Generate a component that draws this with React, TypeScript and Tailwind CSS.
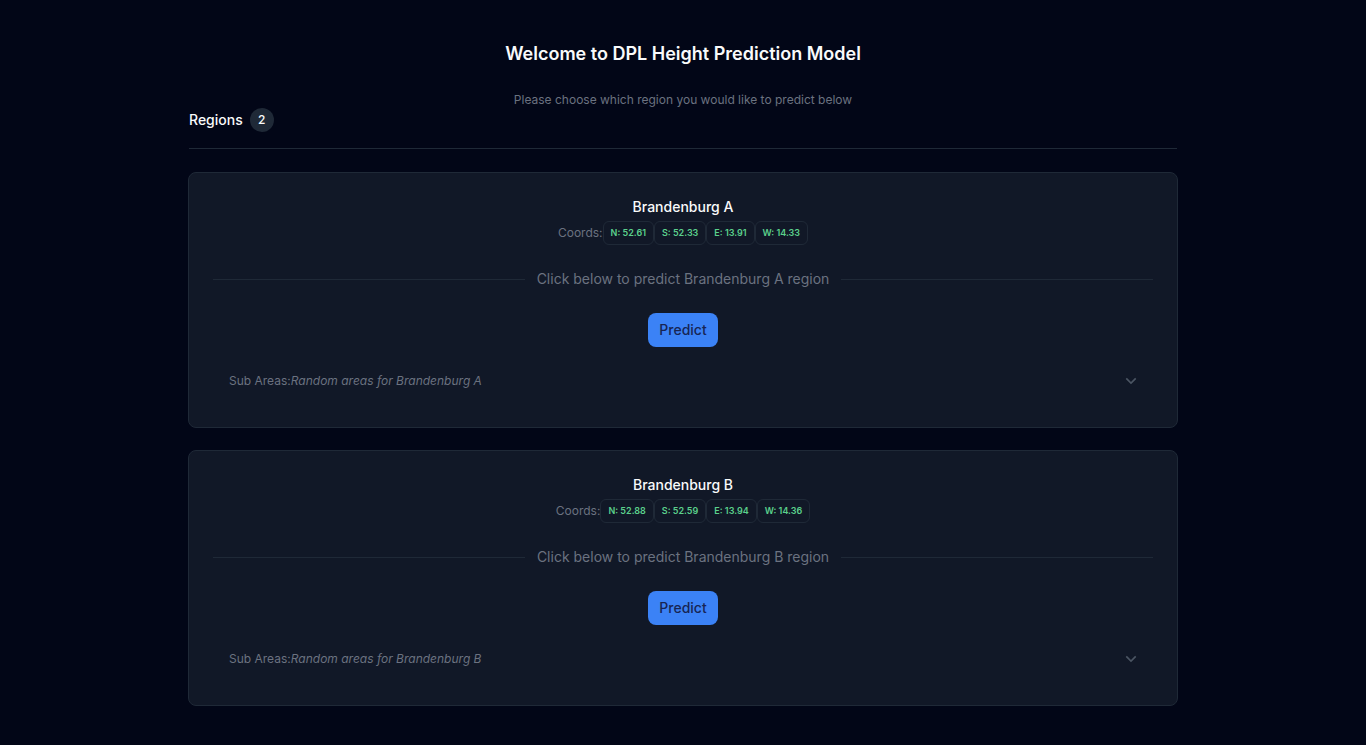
type Region = { name: string; coords: string[] };

const regions: Region[] = [
  { name: "Brandenburg A", coords: ["N: 52.61", "S: 52.33", "E: 13.91", "W: 14.33"] },
  { name: "Brandenburg B", coords: ["N: 52.88", "S: 52.59", "E: 13.94", "W: 14.36"] },
];

function ChevronIcon() {
  return (
    <svg viewBox="0 0 24 24" fill="currentColor" aria-hidden="true" className="-mr-1 size-5 text-[#4b5563]">
      <path d="M11.9999 13.1714L16.9497 8.22168L18.3639 9.63589L11.9999 15.9999L5.63599 9.63589L7.0502 8.22168L11.9999 13.1714Z" />
    </svg>
  );
}

function RegionCard({ region }: { region: Region }) {
  return (
    <section className="rounded-lg border border-[#1f2937] bg-[#111827] p-6">
      <h2 className="text-center text-sm leading-5 font-medium text-[#f9fafb]">{region.name}</h2>
      <div className="mt-1 flex items-center justify-center text-xs text-[#6b7280]">
        <span>Coords:</span>
        {region.coords.map((coord) => (
          <span key={coord} className="rounded-md border border-[#1f2937] px-[7px] py-1 text-[9px] leading-[14px] font-semibold text-[#5bd08c]">
            {coord}
          </span>
        ))}
      </div>
      <div className="my-6 flex items-center gap-3 text-sm leading-5 text-[#6b7280]">
        <div className="h-px flex-1 bg-[#1f2937]" />
        <p>Click below to predict {region.name} region</p>
        <div className="h-px flex-1 bg-[#1f2937]" />
      </div>
      <div className="flex justify-center">
        <button type="button" className="rounded-lg bg-[#3b82f6] px-[11px] py-[7px] text-sm leading-5 font-medium text-[#172554]">
          Predict
        </button>
      </div>
      <button type="button" aria-expanded="false" className="mt-3 flex w-full items-center justify-between px-4 py-3 text-xs text-[#6b7280]">
        <span>
          Sub Areas:<em>Random areas for {region.name}</em>
        </span>
        <ChevronIcon />
      </button>
    </section>
  );
}

export default function App() {
  return (
    <main className="min-h-screen bg-[#020617] px-4 pt-10 pb-10 font-['Inter',sans-serif]">
      <div className="mx-auto max-w-[990px]">
        <h1 className="text-center text-lg leading-7 font-semibold text-[#f9fafb]">Welcome to DPL Height Prediction Model</h1>
        <p className="mt-6 text-center text-xs text-[#6b7280]">Please choose which region you would like to predict below</p>
        <div className="mx-px flex items-center gap-[7px] border-b border-[#1f2937] pb-4 text-sm font-medium text-[#f9fafb]">
          <span>Regions</span>
          <span className="flex size-6 items-center justify-center rounded-full bg-[#1f2937] text-xs">2</span>
        </div>
        <div className="mt-[23px] flex flex-col gap-[22px]">
          {regions.map((region) => (
            <RegionCard key={region.name} region={region} />
          ))}
        </div>
      </div>
    </main>
  );
}
